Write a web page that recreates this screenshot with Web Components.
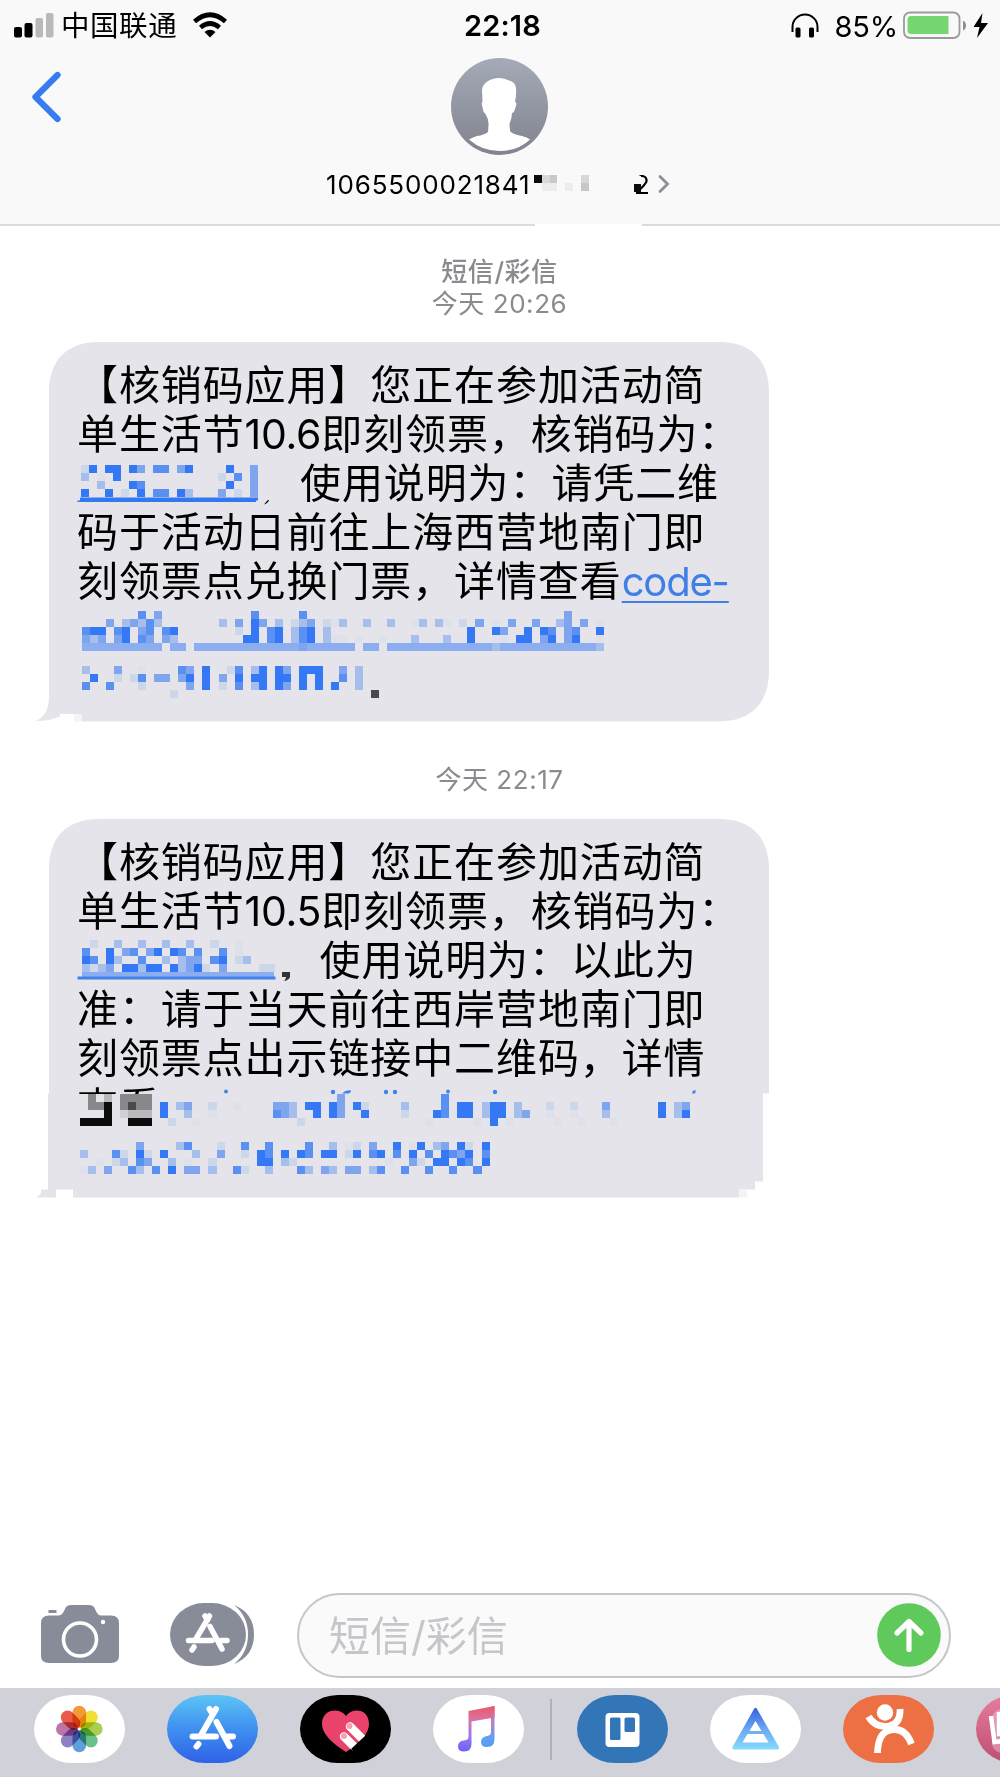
<!DOCTYPE html>
<html lang="zh-CN">
<head>
<meta charset="utf-8">
<title>Messages</title>
<style>
    body {
        margin: 0;
        background: #fff;
        font-family: Inter, "Noto Sans CJK SC", sans-serif;
        text-spacing-trim: space-all;
        color: #000;
    }
</style>
</head>
<body>
<chat-screen></chat-screen>

<script>
// Level characters used by <pixel-block>
const LEVELS = {
    0: '#dfe1ea', 1: '#cdd7ea', 2: '#a6beec', 3: '#7fa5ee', 4: '#5990f1', 5: '#3478f5',
    k: '#0c0c0d', d: '#4a4a4e', g: '#88888b', h: '#b8b8bd', i: '#d0d0d6',
    u: '#8cadef', w: '#f9f9f9', x: '#d8d8d8', y: '#c8c8c8', z: '#ececec'
};

function define(name, html, setup) {
    customElements.define(name, class extends HTMLElement {
        constructor() {
            super();
            this.attachShadow({ mode: 'open' });
            this.shadowRoot.innerHTML = html;
        }

        connectedCallback() {
            if (setup) setup(this, this.shadowRoot);
        }
    });
}

// rows="7:4 9:3/0:33" : rows split by "/", each run is column:levels
define('pixel-block', `
    <style>
        :host { display: block; flex: none; align-self: flex-start; }
        svg { display: block; overflow: visible; }
    </style>
    <svg shape-rendering="crispEdges"></svg>
`, (el, root) => {
    const size = parseFloat(el.getAttribute('cell')) || 8.03;
    const rows = el.getAttribute('rows').split('/');
    let out = '';
    rows.forEach((row, y) => {
        row.trim().split(' ').filter(Boolean).forEach(run => {
            const [start, levels] = run.split(':');
            [...levels].forEach((level, i) => {
                out += `<rect x="${(+start + i) * size}" y="${y * 8}" width="${size}" height="8" fill="${LEVELS[level]}"/>`;
            });
        });
    });
    const svg = root.querySelector('svg');
    svg.setAttribute('width', el.getAttribute('width') || 10);
    svg.setAttribute('height', rows.length * 8);
    svg.innerHTML = out;
});

define('status-bar', `
    <style>
        :host { display: grid; grid-template-columns: 1fr auto 1fr; align-items: center; height: 50px; }
        .left, .right { display: flex; align-items: center; }
        .left { padding-left: 14.400px; }
        .right { justify-content: flex-end; padding-right: 11px; }
        .carrier { font-size: 28.5px; letter-spacing: .6px; margin: 0 16px 0 6.500px; line-height: 50px; padding-top: 1px; }
        .clock { font-size: 29px; font-weight: 600; letter-spacing: .2px; padding-left: 5px; }
        .battery { font-size: 29px; letter-spacing: -.2px; margin: 0 5px 0 15.500px; padding-top: 1px; }
        svg { display: block; flex: none; }
    </style>
    <div class="left">
        <svg width="40" height="50">
            <rect x="0" y="26" width="8" height="10.500" rx="2"/>
            <rect x="10.500" y="22" width="8" height="14.500" rx="2"/>
            <rect x="21.500" y="17" width="7.500" height="19.500" rx="2" fill="#b9b9b9"/>
            <rect x="32" y="12" width="7.500" height="24.500" rx="2" fill="#b9b9b9"/>
        </svg>
        <span class="carrier">中国联通</span>
        <svg width="34" height="50" viewBox="0 0 34 50">
            <path d="M1.500 20.500Q17 7 32.500 20.500" fill="none" stroke="#000" stroke-width="4.600"/>
            <path d="M7.500 26.500Q17 18.500 26.500 26.500" fill="none" stroke="#000" stroke-width="4.600"/>
            <path d="M11.500 31Q17 26.500 22.500 31L17 36.500Z"/>
        </svg>
    </div>
    <div class="clock">22:18</div>
    <div class="right">
        <svg width="28" height="50">
            <path d="M1.500 31V26a12.500 12.500 0 0 1 25 0v5" fill="none" stroke="#000" stroke-width="2"/>
            <rect x="4.500" y="26.500" width="5" height="10" rx="1.500"/>
            <rect x="18" y="26.500" width="5" height="10" rx="1.500"/>
        </svg>
        <span class="battery">85%</span>
        <svg width="86" height="50">
            <rect x="1" y="11.500" width="55.500" height="25.500" rx="6" fill="none" stroke="#9b9b9c" stroke-width="1.800"/>
            <path d="M8 15H45.500V33H8a3.500 3.500 0 0 1-3.500-3.500V18.500A3.500 3.500 0 0 1 8 15Z" fill="#76d672"/>
            <path d="M60 19.500q3 1.500 3 5t-3 5Z" fill="#8d8d8e"/>
            <path d="M79.500 12L70.500 26H76.500L74 37L85 22H78Z"/>
        </svg>
    </div>
`);

define('chat-header', `
    <style>
        :host { display: block; height: 224px; background: #f9f9f9; border-bottom: 2px solid #dbdbdc; position: relative; }
        .row { display: grid; grid-template-columns: 1fr auto 1fr; height: 108px; }
        .row svg { display: block; }
        .back { margin: 20px 0 0 29.500px; }
        .photo { margin: 8px 1px 0 0; }
        .name { display: flex; align-items: center; height: 52px; padding-left: 326px; font-size: 26px; }
        .number { width: 208px; letter-spacing: .85px; white-space: nowrap; }
        .last { position: relative; }
        .last pixel-block { position: absolute; left: -.500px; top: 7px; }
        .break { position: absolute; left: 535px; bottom: -2px; width: 107px; height: 2px; background: #fff; }
    </style>
    <status-bar></status-bar>
    <div class="row">
        <svg class="back" width="34" height="54">
            <path d="M27.500 5L5.500 27L27.500 49" fill="none" stroke="#367bf0" stroke-width="6.300" stroke-linecap="round" stroke-linejoin="round"/>
        </svg>
        <svg class="photo" width="97" height="97" viewBox="0 0 97 97">
            <defs><linearGradient id="g" x1="0" y1="0" x2="0" y2="1"><stop stop-color="#a5aab8"/><stop offset="1" stop-color="#81838e"/></linearGradient></defs>
            <circle cx="48.500" cy="48.500" r="48.500" fill="url(#g)"/>
            <path d="M48.500 20C39 20 31.500 25 31 32L31.500 44Q30 45 31.500 49L32.500 54Q34 55 35 57Q38 62 37.500 67L37 74Q33 77 26 78Q20 80 18 81.500Q31 93 48.500 93Q67 93 79 81.500Q76 79 71 78Q61 76 59 73L58.500 66Q61 60 61 55Q63 55 64 51L65.500 46Q65 44 64 43.500Q65.500 38 65 30Q64.500 24 58 22.500Q54 20 48.500 20Z" fill="#fff"/>
        </svg>
        <span></span>
    </div>
    <div class="name">
        <span class="number">1065500021841</span>
        <pixel-block style="margin-top:17px" width="100" cell="7.800" rows="0:kxy 6:x/1:zz 4:z 6:y"></pixel-block>
        <span class="last">2<pixel-block width="7" cell="7" rows="0:w/0:k"></pixel-block></span>
        <svg width="12" height="20" style="margin-left:8px"><path d="M2 2.500L9.500 10L2 17.500" fill="none" stroke="#8e9096" stroke-width="2.800" stroke-linecap="round"/></svg>
    </div>
    <i class="break"></i>
`);

define('time-stamp', `
    <style>
        :host { display: block; text-align: center; color: #8a8a8f; font-size: 26px; letter-spacing: .55px; line-height: 32px; padding-right: 1px; }
    </style>
    <slot></slot>
`);

define('text-line', `
    <style>
        :host { display: flex; align-items: center; height: 49.150px; font-size: 41px; letter-spacing: .9px; line-height: 49px; white-space: nowrap; }
        ::slotted(.num) { letter-spacing: -.3px; width: 76.600px; }
        ::slotted(a) { color: #3f7fe8; letter-spacing: -1.200px; font-size: 40px; text-decoration: underline; text-decoration-thickness: 2px; text-underline-offset: 5px; }
    </style>
    <slot></slot>
`);

// The outline is drawn behind the slotted lines, in the bubble's own coordinates
define('message-bubble', `
    <style>
        :host { display: block; position: relative; margin-left: 49px; width: 720px; height: 379.500px; }
        svg { position: absolute; left: 0; top: 0; width: 100%; height: 100%; overflow: visible; }
        .lines { position: relative; padding: 18.600px 0 0 28px; }
    </style>
    <svg><path class="shape" fill="#e5e4ea"/><path class="faint" fill="#f4f4f8"/></svg>
    <div class="lines"><slot></slot></div>
`, (el, root) => {
    const top = 'M0 50C0 18 18 0 50 0H670C702 0 720 18 720 50';
    const clipped = el.hasAttribute('clipped');
    root.querySelector('.shape').setAttribute('d', clipped
        ? top + 'V274.500H714V362.500H706V370.500H690V378.500H24V370.500H7V378.500H-13Q-9 376.500-8 374V370.500H-1V274.500H0Z'
        : top + 'V329C720 361 702 379.500 670 379.500H33V372H11V374.500Q0 379-13 379Q0 373 0 355Z');
    root.querySelector('.faint').setAttribute('d', clipped
        ? 'M690 370.500h8v8h-8Z'
        : 'M25 372h8v7.500h-8Z');
});

define('compose-bar', `
    <style>
        :host { display: flex; align-items: center; height: 85px; padding: 0 49px 0 41px; margin-bottom: 10px; }
        svg { display: block; flex: none; }
        .apps { margin: 0 42px 0 50px; }
        .field { display: flex; align-items: center; justify-content: space-between; flex: 1; height: 81px; border: 2px solid #c5c5ca; border-radius: 43px; background: #fafafa; padding: 0 8.500px 0 30px; color: #c5c5ca; font-size: 41px; }
        .field span { padding-bottom: 6px; }
        .field svg { margin-bottom: 2px; }
    </style>
    <svg width="78" height="85">
        <path d="M8 22.500H17Q21 22.500 23 18L25 14Q26.500 12 30 12H48Q51.500 12 53 14L56 20Q57.500 22.500 60 22.500H70Q78 22.500 78 30V63Q78 70 70 70H8Q0 70 0 63V30Q0 22.500 8 22.500Z" fill="#878c98"/>
        <rect x="7.500" y="17" width="8" height="3" fill="#878c98"/>
        <circle cx="39" cy="46.500" r="16.500" fill="none" stroke="#fff" stroke-width="3.600"/>
        <circle cx="62" cy="29" r="2.200" fill="#fff"/>
    </svg>
    <svg class="apps" width="86" height="85">
        <path d="M65 12Q85 20 85 41.500T65 71Q79 60 79 41.500T65 12Z" fill="#878c98"/>
        <rect x="1" y="10" width="76" height="63" rx="34" ry="31.500" fill="#878c98"/>
        <g fill="none" stroke="#fff" stroke-width="5.500" stroke-linecap="round">
            <path d="M40.500 23L26 47.500M36 23L38.500 27M19.500 47.500H43M52 47.500H58M41 33.500L53 56M25 54L23 57"/>
        </g>
    </svg>
    <div class="field">
        <span>短信/彩信</span>
        <svg width="64" height="64">
            <circle cx="32" cy="32" r="31.800" fill="#5fc95b"/>
            <path d="M32 46.500V19M20 30L32 18.500L44 30" fill="none" stroke="#fff" stroke-width="5.200" stroke-linecap="round" stroke-linejoin="round"/>
        </svg>
    </div>
`);

define('app-pill', `
    <style>
        :host { display: block; flex: none; width: 91px; height: 68px; border-radius: 38px / 34px; background: var(--fill, #fff); overflow: hidden; }
    </style>
    <slot></slot>
`);

define('app-drawer', `
    <style>
        :host { display: flex; gap: 41.900px; height: 82px; padding: 7px 0 0 34.200px; background: #d1d2d9; overflow: hidden; }
        svg { display: block; }
        .divider { flex: none; width: 2px; height: 61px; margin: 4px -16.500px 0 -16px; background: #b0b1b7; }
    </style>
    <app-pill><svg width="91" height="68"><g id="petals" transform="translate(45.300 34)"></g></svg></app-pill>
    <app-pill style="--fill:linear-gradient(#5cc4f5,#3f8ff0 50%,#2f62e8)">
        <svg width="91" height="68"><g fill="none" stroke="#fff" stroke-width="6" stroke-linecap="round">
            <path d="M49 14L33.500 41M42.500 14L45 18M25.500 41.500H49M59 41.500H66M49.500 27L62.500 51M31.500 49L29.500 51.500"/>
        </g></svg>
    </app-pill>
    <app-pill style="--fill:#000">
        <svg width="91" height="68">
            <path d="M46 57Q22 42 22 29C22 14 39 12 46 21C53 12 69 14 69 29Q69 42 46 57Z" fill="#ea436b"/>
            <g stroke="#fff" stroke-width="8.500" stroke-linecap="round"><path d="M50 31.500L61.500 43M44 41.500L54 51.500"/></g>
            <path d="M66 40L68 49L56 59L51 54Z" fill="#000"/>
            <circle cx="49.500" cy="31" r="3" fill="#f3a0b5"/><circle cx="44" cy="41" r="3" fill="#f3a0b5"/>
        </svg>
    </app-pill>
    <app-pill>
        <svg width="91" height="68">
            <defs>
                <linearGradient id="m" x1="0" y1="0" x2="0" y2="1"><stop stop-color="#ee5765"/><stop offset=".3" stop-color="#d873a5"/><stop offset=".65" stop-color="#9b79ef"/><stop offset="1" stop-color="#6b63f3"/></linearGradient>
                <linearGradient id="n" x1="0" y1="0" x2="0" y2="1"><stop stop-color="#ee5765"/><stop offset=".35" stop-color="#c17bc4"/><stop offset=".8" stop-color="#62a0f3"/><stop offset="1" stop-color="#509cf1"/></linearGradient>
            </defs>
            <path d="M35.500 16L61.500 11V22.500L38.500 26.500V49Q38.500 56.500 31 56.500Q25 56.500 25 51.500Q25 46 31 45.500Q35.500 45 35.500 42Z" fill="url(#m)"/>
            <path d="M58 11.700L61.500 11V44Q61.500 52 54 52Q48 52 48 47Q48 42 54 41Q58 40.500 58 37Z" fill="url(#n)"/>
        </svg>
    </app-pill>
    <i class="divider"></i>
    <app-pill style="--fill:#3376b8">
        <svg width="91" height="68">
            <rect x="28.500" y="18" width="34" height="34" rx="4" fill="#fff"/>
            <rect x="33" y="22.500" width="10.500" height="22.500" rx="1.500" fill="#3376b8"/>
            <rect x="47.500" y="22.500" width="10.500" height="14.500" rx="1.500" fill="#3376b8"/>
        </svg>
    </app-pill>
    <app-pill>
        <svg width="91" height="68">
            <defs><linearGradient id="t" x1="0" y1="0" x2="0" y2="1"><stop stop-color="#3460de"/><stop offset=".5" stop-color="#6ba5f3"/><stop offset="1" stop-color="#84dcfb"/></linearGradient></defs>
            <path fill-rule="evenodd" fill="url(#t)" d="M44 14Q45.500 11.500 47 14L69 52Q69.500 54.500 67.500 54.500H24Q21.500 54 22.500 52ZM45.500 26L39.500 36H51.500ZM37.500 39L32.500 47.500H58.500L53.500 39Z"/>
        </svg>
    </app-pill>
    <app-pill style="--fill:#ec7043">
        <svg width="91" height="68">
            <circle cx="42" cy="17.500" r="8.200" fill="#fff"/>
            <path d="M25.500 21.500Q31 31.500 43 31.500Q58 30 57 14M34.500 58Q35 37 48 35Q62 32 68.500 49" fill="none" stroke="#fff" stroke-width="6.800"/>
        </svg>
    </app-pill>
    <app-pill style="--fill:linear-gradient(#e77c9b,#bd4f73)">
        <svg width="91" height="68">
            <rect x="16" y="14" width="50" height="44" rx="10" fill="#fff" opacity=".3"/>
            <path d="M15 21L18.500 47L36 45M23 17V39H36" fill="none" stroke="#fff" stroke-width="4.500"/>
        </svg>
    </app-pill>
`, (el, root) => {
    const colors = ['#f19a38', '#f0e034', '#a8cf50', '#6cc08a', '#619fd8', '#8f82c4', '#bd74a8', '#e85b4a'];
    root.getElementById('petals').innerHTML = colors.map((c, i) =>
        `<rect x="-6.800" y="-23.300" width="13.600" height="22" rx="6.800" fill="${c}" transform="rotate(${i * 45})" style="mix-blend-mode:multiply"/>`
    ).join('');
});

define('chat-screen', `
    <style>
        :host { display: flex; flex-direction: column; width: 1000px; height: 1777px; overflow: hidden; }
        main { flex: 1; }
        time-stamp.first { padding-top: 30px; margin-bottom: 22px; }
        time-stamp.second { margin: 42.500px 0 23px; }
        .code { display: block; flex: none; align-self: flex-start; position: relative; }
        .code svg { position: absolute; left: 0; top: 0; overflow: visible; }
        .cut { position: relative; align-items: flex-start; }
        .cut span { display: block; height: 10.500px; overflow: hidden; }
        .cut svg { position: absolute; left: 1px; top: -1px; overflow: visible; }
        .cut pixel-block { position: absolute; left: 3.400px; top: 10.500px; }
        app-drawer { flex: none; }
        compose-bar { flex: none; }
    </style>
    <chat-header></chat-header>
    <main>
        <time-stamp class="first"><b style="font-weight:500">短信/彩信</b><br>今天 20:26</time-stamp>
        <message-bubble>
            <text-line>【核销码应用】您正在参加活动简</text-line>
            <text-line>单生活节<span class="num">10.6</span>即刻领票，核销码为：</text-line>
            <text-line><div class="code" style="width:223px;padding-top:6.500px">
                <pixel-block style="margin-left:3.500px" rows="0:15 3:55 6:53 9:44 12:35 18:5 21:3/0:2 2:0 4:5 17:1 19:4 21:3/2:2 6:54 18:5 21:3/0:5 3:5 5:1 7:5 9:44 12:52 17:3 19:1 21:3"></pixel-block>
                <svg width="1" height="1"><path d="M3 38.500H181V41.500H179V43H.500V41.500H3Z" fill="#3478f0"/><path d="M191 41H192Q191 44 187 45.500Q189 43 191 41Z"/></svg>
            </div>使用说明为：请凭二维</text-line>
            <text-line>码于活动日前往上海西营地南门即</text-line>
            <text-line>刻领票点兑换门票，详情查看<a>code-</a></text-line>
            <text-line><pixel-block style="margin:5px 0 0 5px" rows="7:4 9:3 21:4 27:4 60:3/3:3 5:23242 17:2 19:3 21:53 24:2 26:123 30:10 32:2 35:2 38:2 41:02 44:20 47:1 49:3 51:0 53:3 56:3 59:23 62:3 64:0/0:455 4:45 7:34 10:45 19:1 21:5 23:45 26:245 30:2 48:5 51:53 55:5 57:54 60:34 64:5/0:323 4:35 7:43 10:32 20:55 23:45 26:245 30:20 32:0 34:0 37:0 41:2 45:2 48:5 51:00 54:55 57:35 60:35 64:0/0:uuuuuuuuuu 11:uu 14:uuuuuuuuuuuuu3uuuuuu 35:uu 38:uuuuuuuuuuuuu2uuuuuuuuuuuu2"></pixel-block></text-line>
            <text-line><pixel-block style="margin:11px 0 0 5px" rows="0:2 4:3 7:0 12:43 15:5 18:14 21:25 24:53 27:555 32:3 34:2/1:5 4:1 6:14 9:33 12:35 15:5 17:3 19:5 21:55 24:55 27:5 29:5 32:4 34:2/0:4 3:4 7:1 13:3 15:5 17:1 19:4 21:25 24:53 27:5 29:5 31:5 34:2/11:1 36:d"></pixel-block></text-line>
        </message-bubble>
        <time-stamp class="second">今天 22:17</time-stamp>
        <message-bubble clipped>
            <text-line>【核销码应用】您正在参加活动简</text-line>
            <text-line>单生活节<span class="num">10.5</span>即刻领票，核销码为：</text-line>
            <text-line><div class="code" style="width:242.500px;padding-top:4.500px">
                <pixel-block style="margin-left:5px" rows="1:1 4:2 7:2 10:2 13:2 16:1 19:0/0:4 3:5 5:34 8:35 11:54 14:4 17:4 19:0/0:54 3:52 7:4 10:2 12:233 16:45 19:12/0:21 2:23 5:55 7:255 11:5235 15:1 17:3 22:11"></pixel-block>
                <svg width="1" height="1"><rect x="5" y="36" width="192" height="5" fill="#8cadef"/><rect x=".500" y="40.500" width="198" height="3" fill="#4380e8"/><path d="M205 36h8v5q-1 3-6 4q2-2 2-4h-4Z" fill="#333336"/></svg>
            </div>使用说明为：以此为</text-line>
            <text-line>准：请于当天前往西岸营地南门即</text-line>
            <text-line>刻领票点出示链接中二维码，详情</text-line>
            <text-line class="cut"><span>查看</span>
                <svg width="1" height="1" fill="#4182ec">
                    <circle cx="148" cy="9.500" r="1.900"/><circle cx="255" cy="10" r="2.200"/><path d="M264 11.500q4-4 9-3v1l-2 2Z"/><circle cx="308" cy="10" r="2.200"/><circle cx="317" cy="10" r="2.200"/><circle cx="370" cy="9.500" r="1.900"/><circle cx="417" cy="10" r="2.200"/><path d="M614 11.500l1-3h3l-1 3Z"/>
                </svg>
                <pixel-block rows="1:g 3:h 5:gggg 32:3 45:4/1:ggk 5:gdgg 10:5 12:23 16:1 19:0 24:332 28:55 31:53 34:51 40:2 45:4 47:55 50:255 54:2 58:1 61:1 65:3 72:5 74:23/3:k 5:ihhh 10:5 13:2 16:0 24:432 29:5 31:53 35:5 40:1 44:54 47:55 50:255 54:23 58:0 61:0 65:2 72:5 74:25/0:kkkk 6:kkk 11:1 14:0 27:1 43:0 49:0 51:5 53:0 59:0 62:0 66:0"></pixel-block>
            </text-line>
            <text-line><pixel-block style="margin:10px 0 0 3.400px" rows="7:3 12:24 17:1 20:4 23:4 28:4 31:2 33:01 36:3 39:5 41:05 44:23 47:51 50:5/0:2 4:41 7:51 10:5 14:2 17:3 20:1 22:54 25:5 27:54 30:55 33:15 36:45 39:4 41:5 43:4 45:5435 50:4/2:0 4:12 7:43 11:2 13:0 16:1 22:55 25:21 38:0 41:31 44:55 47:54 50:5/0:02 3:3 6:42 9:4 11:5 13:33 16:2 19:41 23:2 27:42 30:32 33:33 36:24 40:4 43:4 46:4 49:4"></pixel-block></text-line>
        </message-bubble>
    </main>
    <compose-bar></compose-bar>
    <app-drawer></app-drawer>
`);
</script>
</body>
</html>
